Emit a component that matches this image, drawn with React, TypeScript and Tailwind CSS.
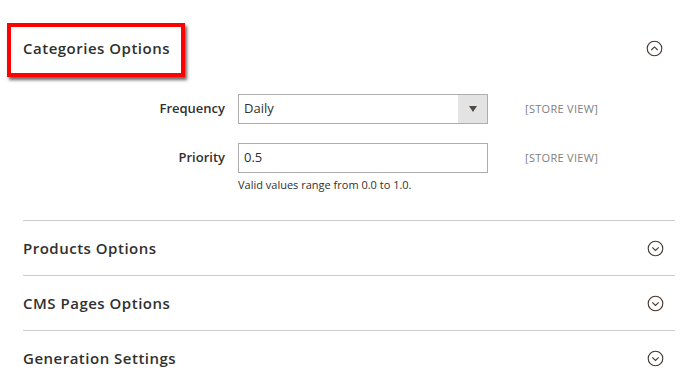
import React from "react";

const Chevron = ({ up }: { up?: boolean }) => (
  <svg width="17" height="17" viewBox="0 0 17 17" className="block">
    <circle cx="8.5" cy="8.5" r="7.3" fill="none" stroke="#41362f" strokeWidth="1.1" />
    {up ? (
      <path d="M5.3 10 L8.5 6.9 L11.7 10" fill="none" stroke="#41362f" strokeWidth="1.1" />
    ) : (
      <path d="M5.3 7.3 L8.5 10.4 L11.7 7.3" fill="none" stroke="#41362f" strokeWidth="1.1" />
    )}
  </svg>
);

const Row = ({ title }: { title: string }) => (
  <div className="h-[55px] border-t border-[#cccccc] flex items-center justify-between">
    <span className="text-[15px] font-semibold text-[#303030] tracking-[0.5px]">{title}</span>
    <span className="mr-[11px]">
      <Chevron />
    </span>
  </div>
);

export default function App() {
  return (
    <div
      className="w-[698px] h-[382px] bg-white overflow-hidden px-[23px] pt-[20px]"
      style={{ fontFamily: '"Open Sans", "Liberation Sans", sans-serif' }}
    >
      <div className="h-[56px] flex items-center justify-between">
        <span className="relative text-[15px] font-semibold text-[#303030] tracking-[0.5px]">
          Categories Options
          <span className="absolute left-[-16px] top-[-14px] w-[178px] h-[54px] border-[4px] border-[#ff0000] shadow-[2px_3px_3px_rgba(0,0,0,0.6)]" />
        </span>
        <span className="mr-[12px]">
          <Chevron up />
        </span>
      </div>
      <div className="pt-[18px] pb-[28px]">
        <div className="flex items-center h-[30px]">
          <div className="w-[202px] text-right text-[13px] font-semibold text-[#303030]">Frequency</div>
          <div className="ml-[13px] w-[250px] h-[30px] border border-[#adadad] flex items-stretch">
            <div className="flex-1 flex items-center pl-[5px] text-[13px] text-[#303030]">Daily</div>
            <div className="w-[29px] bg-[#e3e3e3] flex items-center justify-center">
              <svg width="8" height="6" viewBox="0 0 8 6">
                <path d="M0 0 H8 L4 6 Z" fill="#514943" />
              </svg>
            </div>
          </div>
          <div className="ml-[37px] text-[11px] text-[#808080] tracking-[0.3px]">[STORE VIEW]</div>
        </div>
        <div className="flex items-center h-[30px] mt-[19px]">
          <div className="w-[202px] text-right text-[13px] font-semibold text-[#303030]">Priority</div>
          <div className="ml-[13px] w-[250px] h-[30px] border border-[#adadad] flex items-center pl-[5px] text-[13px] text-[#303030]">
            0.5
          </div>
          <div className="ml-[37px] text-[11px] text-[#808080] tracking-[0.3px]">[STORE VIEW]</div>
        </div>
        <div className="ml-[215px] mt-[4px] text-[11px] text-[#303030] leading-[15px]">
          Valid values range from 0.0 to 1.0.
        </div>
      </div>
      <Row title="Products Options" />
      <Row title="CMS Pages Options" />
      <Row title="Generation Settings" />
    </div>
  );
}
